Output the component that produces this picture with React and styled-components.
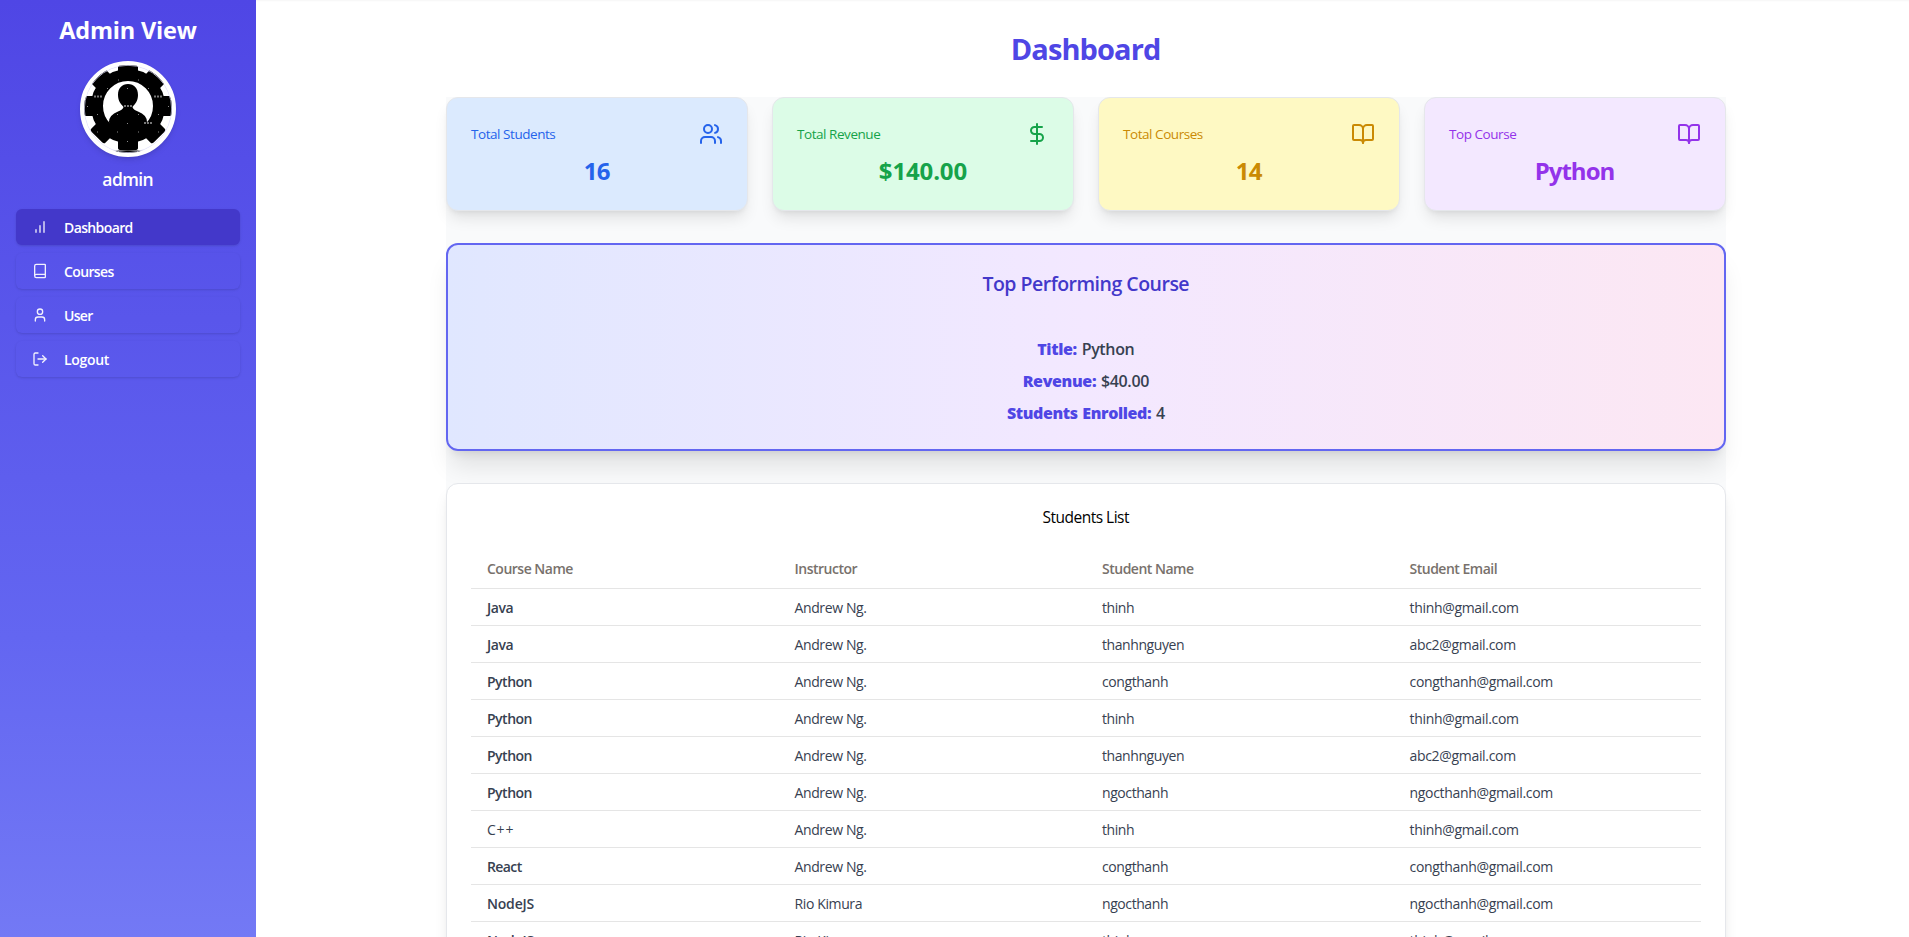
import React from "react";
import styled, { createGlobalStyle } from "styled-components";
import { Users, DollarSign, BookOpen, Book, User, LogOut } from "lucide-react";

const GlobalStyle = createGlobalStyle`
  *, *::before, *::after { box-sizing: border-box; }
  html, body, #root { height: 100%; }
  body {
    margin: 0;
    overflow: hidden;
    background: #fff;
    color: #0c0a09;
    font-family: "Open Sans", "Noto Sans", sans-serif;
    line-height: 1.5;
  }
  h1, h2, h3, p { margin: 0; }
`;

/* Text with its own tracking; the negative margin keeps centred text centred. */
const T = styled.span`
  letter-spacing: ${(p) => p.$ls || 0}px;
  margin-right: ${(p) => -(p.$ls || 0)}px;
`;

const Page = styled.div`
  display: flex;
  height: 100vh;
  overflow: hidden;
`;

const Sidebar = styled.aside`
  width: 256px;
  flex: none;
  padding: 12px 16px;
  display: flex;
  flex-direction: column;
  align-items: center;
  background: linear-gradient(to bottom, #4f46e5, #6366f1 68%, #7379f5);
  color: #fff;
`;

const Brand = styled.h2`
  font-size: 23.5px;
  line-height: 36px;
  font-weight: 700;
`;

const Avatar = styled.div`
  width: 96px;
  height: 96px;
  margin-top: 13px;
  border: 4px solid #fff;
  border-radius: 50%;
  overflow: hidden;
  background: #fff;
  box-shadow: 0 4px 6px -1px rgba(0, 0, 0, 0.1), 0 2px 4px -2px rgba(0, 0, 0, 0.1);
  svg { display: block; }
`;

const UserName = styled.p`
  margin-top: 8px;
  font-size: 17.5px;
  line-height: 28px;
  font-weight: 600;
`;

const Nav = styled.nav`
  width: 100%;
  margin-top: 16px;
  display: flex;
  flex-direction: column;
  gap: 8px;
`;

const NavItem = styled.a`
  height: 36px;
  padding: 0 16px;
  display: flex;
  align-items: center;
  gap: 16px;
  border-radius: 6px;
  font-size: 14px;
  font-weight: 600;
  background: ${(p) => (p.$active ? "#4338ca" : "transparent")};
  box-shadow: 0 1px 3px rgba(0, 0, 0, 0.1), 0 1px 2px -1px rgba(0, 0, 0, 0.1);
  svg { flex: none; opacity: 0.92; }
`;

const Main = styled.main`
  flex: 1;
  display: flex;
  flex-direction: column;
  align-items: center;
  padding: 25px 0 0 7px;
  box-shadow: inset 0 2px 2px -1px rgba(0, 0, 0, 0.04);
`;

const PageTitle = styled.h1`
  font-size: 29px;
  line-height: 48px;
  font-weight: 700;
  color: #4f46e5;
`;

const Content = styled.div`
  width: 1280px;
  margin-top: 24px;
  flex: none;
  display: flex;
  flex-direction: column;
  gap: 32px;
  background: #f9fafb;
`;

const Stats = styled.section`
  display: grid;
  grid-template-columns: repeat(4, 1fr);
  gap: 24px;
`;

const StatCard = styled.div`
  height: 114px;
  padding: 24px;
  border: 1px solid #e5e7eb;
  border-radius: 12px;
  background: ${(p) => p.$bg};
  color: ${(p) => p.$fg};
  box-shadow: 0 10px 15px -3px rgba(0, 0, 0, 0.1), 0 4px 6px -4px rgba(0, 0, 0, 0.1);
`;

const StatHead = styled.div`
  display: flex;
  justify-content: space-between;
  align-items: center;
  height: 24px;
  font-size: 13.5px;
  font-weight: 500;
`;

const StatValue = styled.p`
  margin-top: 9px;
  text-align: center;
  font-size: 24px;
  line-height: 32px;
  font-weight: 700;
`;

const TopPanel = styled.section`
  height: 208px;
  padding-top: 25px;
  border: 2px solid #6366f1;
  border-radius: 12px;
  background: linear-gradient(to right, #e0e7ff, #f3e8ff, #fce7f3) padding-box;
  box-shadow: 0 20px 25px -5px rgba(0, 0, 0, 0.1), 0 8px 10px -6px rgba(0, 0, 0, 0.1);
  text-align: center;
`;

const PanelTitle = styled.h3`
  font-size: 19.5px;
  line-height: 28px;
  font-weight: 600;
  color: #4338ca;
`;

const Facts = styled.div`
  margin-top: 39px;
  display: flex;
  flex-direction: column;
  gap: 8px;
  font-size: 16px;
  line-height: 24px;
  font-weight: 600;
  word-spacing: 1px;
  color: #374151;
`;

const Key = styled.strong`
  font-weight: 800;
  color: #4f46e5;
`;

const ListCard = styled.section`
  padding: 21px 24px 24px;
  border: 1px solid #e5e7eb;
  border-radius: 12px;
  background: #fff;
  box-shadow: 0 10px 15px -3px rgba(0, 0, 0, 0.1), 0 4px 6px -4px rgba(0, 0, 0, 0.1);
`;

const ListTitle = styled.h3`
  text-align: center;
  font-size: 15.5px;
  line-height: 24px;
  font-weight: 500;
  color: #000;
`;

const Table = styled.div`
  margin-top: 19px;
  font-size: 14px;
`;

const Row = styled.div`
  display: grid;
  grid-template-columns: repeat(4, 1fr);
  align-items: center;
  height: ${(p) => (p.$head ? 41 : 37)}px;
  border-bottom: 1px solid #e5e5e5;
  color: ${(p) => (p.$head ? "#78716c" : "#374151")};
  font-weight: ${(p) => (p.$head ? 600 : 400)};
`;

const Cell = styled.div`
  padding-left: 16px;
  font-weight: ${(p) => p.$weight || "inherit"};
`;

function BarsIcon() {
  return (
    <svg width="16" height="16" viewBox="0 0 24 24" fill="none" stroke="currentColor" strokeWidth="2" strokeLinecap="round">
      <path d="M12 20V10M18 20V4M6 20v-4" />
    </svg>
  );
}

const stats = [
  { label: "Total Students", value: "16", vls: -0.7, Icon: Users, bg: "#dbeafe", fg: "#2563eb" },
  { label: "Total Revenue", value: "$140.00", vls: -0.15, Icon: DollarSign, bg: "#dcfce7", fg: "#16a34a" },
  { label: "Total Courses", value: "14", vls: -0.7, Icon: BookOpen, bg: "#fef9c3", fg: "#ca8a04" },
  { label: "Top Course", value: "Python", vls: -1, Icon: BookOpen, bg: "#f3e8ff", fg: "#9333ea" },
];

const nav = [
  { label: "Dashboard", ls: -0.62, Icon: BarsIcon, active: true },
  { label: "Courses", ls: -0.62, Icon: Book },
  { label: "User", ls: -0.7, Icon: User },
  { label: "Logout", ls: -0.3, Icon: LogOut },
];

const courseTracking = { Java: -0.45, Python: -0.5, "C++": 0.8, React: -0.6, NodeJS: -0.2 };

const students = [
  ["Java", "Andrew Ng.", "thinh"],
  ["Java", "Andrew Ng.", "thanhnguyen", "abc2@gmail.com"],
  ["Python", "Andrew Ng.", "congthanh"],
  ["Python", "Andrew Ng.", "thinh"],
  ["Python", "Andrew Ng.", "thanhnguyen", "abc2@gmail.com"],
  ["Python", "Andrew Ng.", "ngocthanh"],
  ["C++", "Andrew Ng.", "thinh"],
  ["React", "Andrew Ng.", "congthanh"],
  ["NodeJS", "Rio Kimura", "ngocthanh"],
  ["NodeJS", "Rio Kimura", "thinh"],
];

const specks = [
  [34, 14.5], [54, 14.5], [23, 23], [64, 23], [43, 23], [3, 41], [84, 41], [13, 49], [33, 49],
  [54, 49], [74, 49], [43, 58], [13, 66.5], [74, 66.5], [33, 66.5], [54, 66.5], [43, 76],
];
const marks = [[14, 31.5], [74, 31.5], [44, 41], [64, 58]];

function GearUser() {
  return (
    <svg width="88" height="88" viewBox="0 0 88 88">
      {[0, 45, 90, 135, 180, 225, 270, 315].map((a) => (
        <path key={a} d="M34 -1Q34 -3 37 -3H51Q54 -3 54 -1V6L57 12H31L34 6Z" transform={`rotate(${a} 44 41)`} />
      ))}
      <circle cx="44" cy="41" r="31" fill="none" stroke="#000" strokeWidth="12" />
      <path d="M44 19C50 19 54 23 54 30C54 36 51 39 48.500 42Q49 44.500 54 46.500Q63 50 63 57L60 70H28L25 57Q25 50 34 46.500Q39 44.500 39.500 42C37 39 34 36 34 30C34 23 38 19 44 19Z" />
      <path d="M27 86Q44 84.500 61 86V88H27Z" />
      {specks.map(([x, y]) => (
        <rect key={`${x}-${y}`} x={x} y={y} width="1" height="1" fill="#8a8a8a" />
      ))}
      {marks.map(([x, y]) => (
        <path key={`${x}-${y}`} d={`M${x - 4} ${y}h8`} stroke="#777" strokeWidth="2" strokeDasharray="2 1" />
      ))}
      <circle cx="44" cy="44" r="43.700" fill="none" stroke="#dcdafa" strokeWidth="0.8" />
    </svg>
  );
}

export default function App() {
  return (
    <Page>
      <GlobalStyle />
      <Sidebar>
        <Brand><T $ls={-0.2}>Admin View</T></Brand>
        <Avatar><GearUser /></Avatar>
        <UserName><T $ls={-0.6}>admin</T></UserName>
        <Nav>
          {nav.map(({ label, ls, Icon, active }) => (
            <NavItem key={label} $active={active}>
              <Icon size={16} />
              <T $ls={ls}>{label}</T>
            </NavItem>
          ))}
        </Nav>
      </Sidebar>
      <Main>
        <PageTitle><T $ls={-0.9}>Dashboard</T></PageTitle>
        <Content>
          <Stats>
            {stats.map(({ label, value, vls, Icon, bg, fg }) => (
              <StatCard key={label} $bg={bg} $fg={fg}>
                <StatHead><T $ls={-0.45}>{label}</T><Icon size={24} /></StatHead>
                <StatValue><T $ls={vls}>{value}</T></StatValue>
              </StatCard>
            ))}
          </Stats>
          <TopPanel>
            <PanelTitle><T $ls={-0.5}>Top Performing Course</T></PanelTitle>
            <Facts>
              <p><T $ls={-0.35}><Key>Title:</Key> Python</T></p>
              <p><T $ls={-0.35}><Key>Revenue:</Key> $40.00</T></p>
              <p><T $ls={-0.4}><Key>Students Enrolled:</Key> 4</T></p>
            </Facts>
          </TopPanel>
          <ListCard>
            <ListTitle><T $ls={-0.5}>Students List</T></ListTitle>
            <Table>
              <Row $head>
                {["Course Name", "Instructor", "Student Name", "Student Email"].map((h) => (
                  <Cell key={h}><T $ls={-0.5}>{h}</T></Cell>
                ))}
              </Row>
              {students.map(([course, teacher, name, email], i) => (
                <Row key={i}>
                  <Cell $weight={course === "C++" ? 500 : 600}><T $ls={courseTracking[course]}>{course}</T></Cell>
                  <Cell><T $ls={-0.38}>{teacher}</T></Cell>
                  <Cell><T $ls={-0.42}>{name}</T></Cell>
                  <Cell><T $ls={-0.32}>{email || `${name}@gmail.com`}</T></Cell>
                </Row>
              ))}
            </Table>
          </ListCard>
        </Content>
      </Main>
    </Page>
  );
}
